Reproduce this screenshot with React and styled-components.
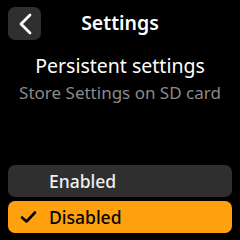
import React, { useState } from 'react';
import styled, { createGlobalStyle } from 'styled-components';

const Global = createGlobalStyle`
  html, body {
    margin: 0;
    padding: 0;
    background: #000;
  }
  body {
    font-family: "Noto Sans", "Open Sans", sans-serif;
  }
`;

const Screen = styled.div`
  width: 240px;
  height: 240px;
  background: #000;
  display: flex;
  flex-direction: column;
  overflow: hidden;
`;

const Header = styled.div`
  position: relative;
  height: 46px;
  display: flex;
  align-items: center;
  justify-content: center;
`;

const BackButton = styled.button`
  position: absolute;
  left: 8px;
  top: 7px;
  width: 33px;
  height: 33px;
  border: none;
  border-radius: 7px;
  background: #2f2f2f;
  display: flex;
  align-items: center;
  justify-content: center;
  padding: 0;
`;

const Title = styled.div`
  color: #fff;
  font-size: 19.5px;
  font-weight: 600;
  margin-top: -1px;
`;

const Heading = styled.div`
  color: #fff;
  font-size: 19.5px;
  text-align: center;
  line-height: 24px;
  margin-top: 8px;
`;

const Sub = styled.div`
  color: #8a8a8a;
  font-size: 17px;
  text-align: center;
  line-height: 22px;
  margin-top: 4px;
`;

const Options = styled.div`
  margin-top: auto;
  padding: 0 8px 7px;
  display: flex;
  flex-direction: column;
  gap: 4px;
`;

const Option = styled.div`
  height: 32px;
  border-radius: 7px;
  background: ${p => (p.$selected ? '#ffa00f' : '#2f2f2f')};
  color: ${p => (p.$selected ? '#000' : '#f0f0f0')};
  display: flex;
  align-items: center;
  font-size: 17.5px;
  font-weight: 500;
`;

const Mark = styled.span`
  width: 41px;
  display: flex;
  justify-content: center;
`;

const Check = () => (
  <svg width="17" height="14" viewBox="0 0 17 14">
    <path d="M2 7.5 L6.5 11.5 L15 2.5" fill="none" stroke="#000" strokeWidth="2.6" strokeLinecap="round" strokeLinejoin="round" />
  </svg>
);

export default function App() {
  const [value, setValue] = useState('Disabled');
  return (
    <Screen>
      <Global />
      <Header>
        <BackButton>
          <svg width="16" height="24" viewBox="0 0 16 24">
            <path d="M13 3 L4 12 L13 21" fill="none" stroke="#fff" strokeWidth="2.8" strokeLinecap="round" strokeLinejoin="round" />
          </svg>
        </BackButton>
        <Title>Settings</Title>
      </Header>
      <Heading>Persistent settings</Heading>
      <Sub>Store Settings on SD card</Sub>
      <Options>
        {['Enabled', 'Disabled'].map(o => (
          <Option key={o} $selected={value === o} onClick={() => setValue(o)}>
            <Mark>{value === o && <Check />}</Mark>
            {o}
          </Option>
        ))}
      </Options>
    </Screen>
  );
}
